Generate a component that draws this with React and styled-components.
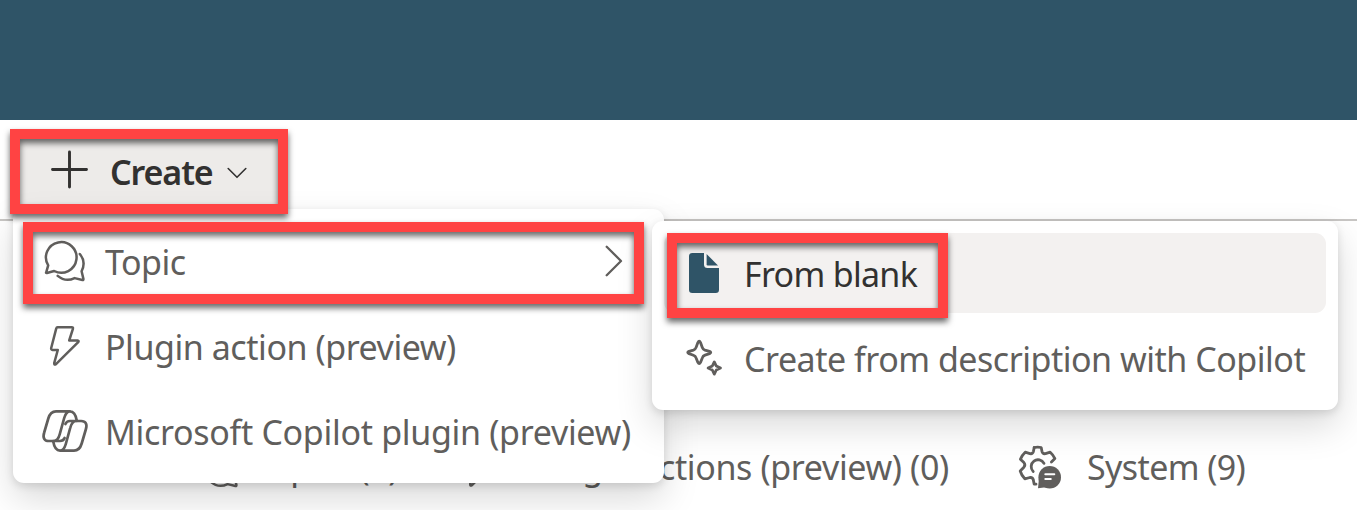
import React from 'react';
import styled, { createGlobalStyle, css } from 'styled-components';

const Global = createGlobalStyle`
  *, *::before, *::after { box-sizing: border-box; }
  html, body { margin: 0; padding: 0; background: #fff; overflow: hidden; }
  body { font-family: 'Noto Sans', 'Open Sans', sans-serif; font-size: 34px; color: #605e5c; }
`;

const Page = styled.div`
  position: relative;
  width: 1357px;
  height: 510px;
  overflow: hidden;
  display: flex;
  flex-direction: column;
`;

const Banner = styled.header`
  flex: 0 0 120px;
  background: #2f5467;
`;

const CommandBar = styled.div`
  flex: 0 0 101px;
  display: flex;
  align-items: flex-start;
  padding: 12px 13px 0;
  border-bottom: 2px solid #c8c6c4;
`;

const CreateButton = styled.button`
  display: flex;
  align-items: center;
  width: 265px;
  height: 78px;
  padding: 0 0 3px 38px;
  border: 0;
  background: #edebe9;
  color: #323130;
  font: inherit;
  font-weight: 600;
`;

const Label = styled.span`
  white-space: nowrap;
  line-height: 44px;
  letter-spacing: ${(p) => p.$spacing || 0}px;
`;

const ButtonLabel = styled(Label)`
  margin: 4px 14px 0 22px;
`;

const Tabs = styled.nav`
  display: flex;
  align-items: center;
  height: 84px;
  margin-top: 204px;
  margin-left: 197px;
`;

const Tab = styled.div`
  display: flex;
  align-items: center;
  width: ${(p) => p.$width}px;
  gap: ${(p) => p.$gap}px;
  flex: none;
`;

const Menu = styled.div`
  position: absolute;
  left: ${(p) => p.$left}px;
  top: ${(p) => p.$top}px;
  width: ${(p) => p.$width}px;
  padding: 12px;
  display: flex;
  flex-direction: column;
  gap: 5px;
  background: #fff;
  border-radius: 11px;
  box-shadow: 0 16px 36px rgba(0, 0, 0, 0.15), 0 3px 9px rgba(0, 0, 0, 0.12);
`;

const MenuItem = styled.div`
  display: flex;
  align-items: center;
  height: 80px;
  padding: 0 29px 0 16px;
  border-radius: 11px;
  ${(p) => p.$active && css`
    background: #f3f1f0;
    color: #323130;
  `}
`;

const MenuLabel = styled(Label)`
  margin-top: 1px;
`;

const IconSlot = styled.span`
  display: flex;
  align-items: center;
  justify-content: center;
  flex: 0 0 48px;
  height: 48px;
  margin-right: 16px;
`;

const Spacer = styled.span`
  flex: 1;
`;

const Highlight = styled.div`
  position: absolute;
  left: ${(p) => p.$left}px;
  top: ${(p) => p.$top}px;
  width: ${(p) => p.$width}px;
  height: ${(p) => p.$height}px;
  border: 10px solid #ff4343;
  filter: drop-shadow(0 4px 3px rgba(0, 0, 0, 0.6));
  pointer-events: none;
`;

const Line = styled.svg`
  display: block;
  flex: none;
  overflow: visible;
  fill: none;
  stroke: currentColor;
  stroke-width: ${(p) => p.$weight || 2.5};
  stroke-linecap: round;
  stroke-linejoin: round;
`;

const PlusIcon = () => (
  <Line width="37" height="38" viewBox="0 0 37 38" $weight={2.9}>
    <path d="M18.5 1v35M1.5 18.5h34" />
  </Line>
);

const ChevronIcon = styled(Line)`
  margin-top: 7px;
`;

const ChevronDown = () => (
  <ChevronIcon width="20" height="12" viewBox="0 0 20 12" $weight={1.6}>
    <path d="M1.2 1.5 10 10.3l8.8-8.8" />
  </ChevronIcon>
);

const ChevronRight = () => (
  <Line width="18" height="32" viewBox="0 0 18 32" $weight={2.3}>
    <path d="M1.7 1.7 16 16 1.7 30.3" />
  </Line>
);

const ChatIcon = () => (
  <Line width="42" height="42" viewBox="0 0 42 42">
    <path d="M2.2 32.3 4.2 25.4A15.3 15.3 0 1 1 10.2 31L2.9 33Q1.7 33.2 2.2 32.3Z" />
    <path d="M35.8 14C40 19 40.5 25.5 37.6 31.3L39.4 38.9Q39.6 40.2 38.4 40L30.6 38.1C25.2 40.7 18.7 40.1 13.7 35.9" />
  </Line>
);

const BoltIcon = () => (
  <Line width="30" height="40" viewBox="0 0 30 40">
    <path d="M7.5 1.2h14.2q1.7 0 1.2 1.6L19.2 14.5h8.3q1.8.3.7 1.7L6 38.2Q4 39.4 4.2 37.2L7.8 24H2.6Q.8 23.8 1.2 22L6.2 2.6Q6.6 1.2 7.5 1.2Z" />
  </Line>
);

const copilotLobe =
  'M34.8 10.8C34 6 32.5 1.4 28 1.4H14C9.5 1.4 7.5 4.5 6.3 8.5L2.2 22.5C.4 28 2.5 31 6.8 31H11.5C15.5 31 16.8 28 17.8 24L22.2 8C23.2 4.5 24.5 1.4 28 1.4M11.5 31H18C20.5 31 21.8 30 22.6 28';

const CopilotIcon = () => (
  <Line width="46" height="42" viewBox="0 0 46 42" $weight={2.7}>
    <path d={copilotLobe} />
    <path transform="rotate(180 23 21)" d={copilotLobe} />
  </Line>
);

const SparkleIcon = () => (
  <Line width="35" height="36" viewBox="0 0 35 36" $weight={2.8}>
    <path d="M10.9 2.6Q12.2-.2 13.5 2.6L15.3 7.4Q16 9.4 18 10.1L22.5 11.4Q25 12.5 22.5 13.7L18 15.2Q16 15.9 15.3 17.9L13.5 22.4Q12.2 25 10.9 22.4L9.1 17.9Q8.4 15.9 6.4 15.2L2 13.7Q-.5 12.5 2 11.4L6.4 10.1Q8.4 9.4 9.1 7.4Z" />
    <path d="M27.3 21.9L29.3 26 33.5 28 29.3 30 27.3 34.1 25.3 30 21.1 28 25.3 26Z" />
  </Line>
);

const DocumentIcon = () => (
  <svg width="30" height="40" viewBox="0 0 30 40" fill="#2f5467">
    <path d="M3.3 0H15v11.5A3.5 3.5 0 0 0 18.5 15H30v21.7A3.3 3.3 0 0 1 26.7 40H3.3A3.3 3.3 0 0 1 0 36.7V3.3A3.3 3.3 0 0 1 3.3 0Z" />
    <path d="M17.6 1v10.3q0 1.2 1.2 1.2H29Z" />
  </svg>
);

const SystemIcon = () => (
  <Line width="44" height="44" viewBox="0 0 44 44" $weight={2.8}>
    <path d="M16.2 2.5Q19.7 1.7 23.2 2.5L24 6.6Q24.8 9.2 27.5 8.6L32.2 7.2Q35.2 9.8 36.9 13.6L33.4 17" />
    <path d="M16.2 2.5L15.4 6.6Q14.6 9.2 11.9 8.6L7.2 7.2Q4 10.2 2.4 14.2L5.9 17.6Q7.8 19.8 5.9 22.2L2.2 26Q3.6 30.6 6.8 33.8L11.9 32.5Q14.8 32.2 15.3 34.9L16.2 39.2H18" />
    <path d="M15.2 26.4A6.8 6.8 0 1 1 26 18.4" />
    <circle cx="31.7" cy="32.2" r="11.3" fill="currentColor" stroke="none" />
    <path d="M21 33 20 43.2 30 42Z" fill="currentColor" stroke="none" />
    <path d="M27.3 29.3h9M27.3 34h5.5" stroke="#fff" strokeWidth="2" />
  </Line>
);

export default function App() {
  return (
    <Page>
      <Global />
      <Banner />
      <CommandBar>
        <CreateButton>
          <PlusIcon />
          <ButtonLabel $spacing={-1.1}>Create</ButtonLabel>
          <ChevronDown />
        </CreateButton>
      </CommandBar>
      <Tabs>
        <Tab $width={269} $gap={15}><ChatIcon /><Label $spacing={-0.4}>Topics (9)</Label></Tab>
        <Tab $width={552} $gap={37}><BoltIcon /><Label $spacing={-0.37}>Plugin actions (preview) (0)</Label></Tab>
        <Tab $width={240} $gap={25}><SystemIcon /><Label $spacing={-0.6}>System (9)</Label></Tab>
      </Tabs>
      <Menu $left={13} $top={209} $width={651}>
        <MenuItem>
          <IconSlot><ChatIcon /></IconSlot>
          <MenuLabel $spacing={-0.5}>Topic</MenuLabel>
          <Spacer />
          <ChevronRight />
        </MenuItem>
        <MenuItem>
          <IconSlot><BoltIcon /></IconSlot>
          <MenuLabel $spacing={-0.45}>Plugin action (preview)</MenuLabel>
        </MenuItem>
        <MenuItem>
          <IconSlot><CopilotIcon /></IconSlot>
          <MenuLabel $spacing={-0.31}>Microsoft Copilot plugin (preview)</MenuLabel>
        </MenuItem>
      </Menu>
      <Menu $left={652} $top={221} $width={686}>
        <MenuItem $active>
          <IconSlot><DocumentIcon /></IconSlot>
          <MenuLabel $spacing={-0.7}>From blank</MenuLabel>
        </MenuItem>
        <MenuItem>
          <IconSlot><SparkleIcon /></IconSlot>
          <MenuLabel $spacing={-0.48}>Create from description with Copilot</MenuLabel>
        </MenuItem>
      </Menu>
      <Highlight $left={10} $top={129} $width={278} $height={85} />
      <Highlight $left={23} $top={222} $width={621} $height={82} />
      <Highlight $left={667} $top={233} $width={281} $height={85} />
    </Page>
  );
}
